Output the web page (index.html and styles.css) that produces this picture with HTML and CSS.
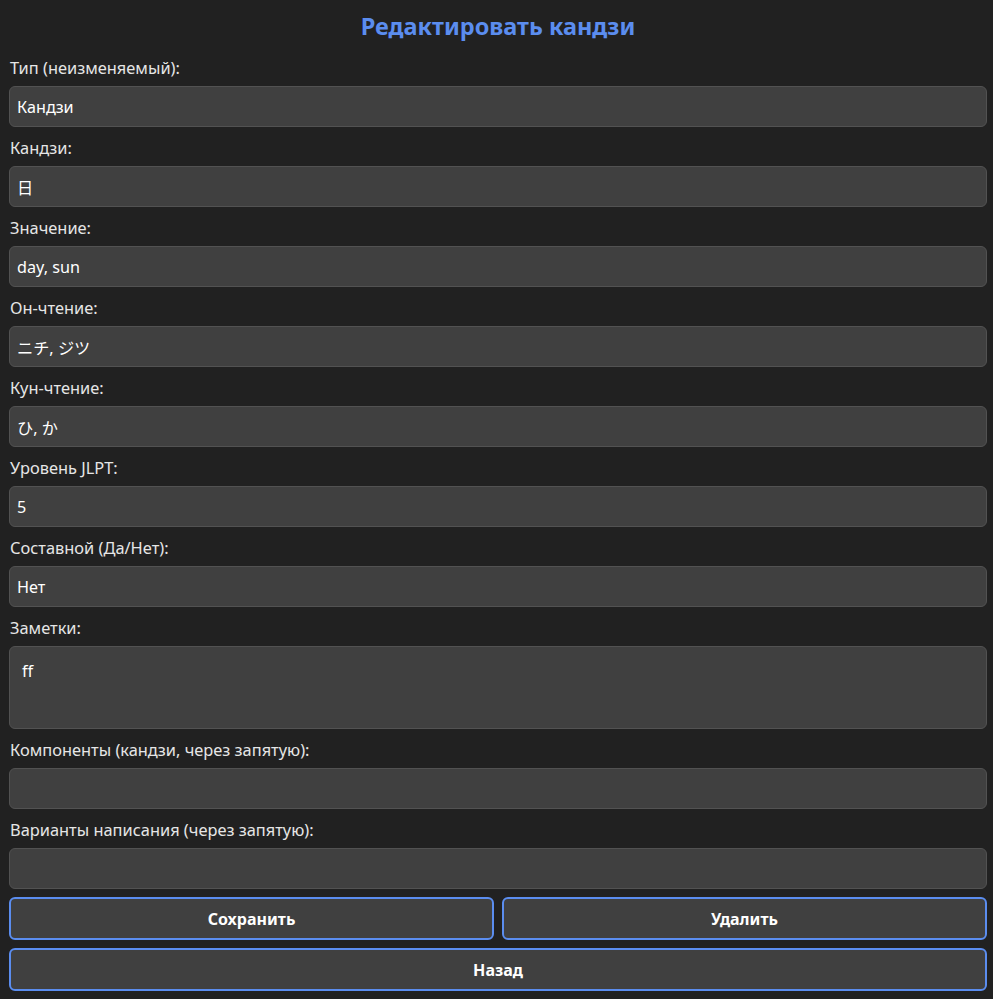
FILE: index.html
```html
<!DOCTYPE html>
<html lang="ru">
<head>
<meta charset="utf-8">
<title>Редактировать кандзи</title>
<link rel="stylesheet" href="styles.css">
</head>
<body>
<div class="page">
  <h2 class="title">Редактировать кандзи</h2>
  <form class="form">
    <label class="label">Тип (неизменяемый):</label>
    <input class="field" type="text" value="Кандзи" readonly>
    <label class="label">Кандзи:</label>
    <input class="field jp" type="text" value="日">
    <label class="label">Значение:</label>
    <input class="field" type="text" value="day, sun">
    <label class="label">Он-чтение:</label>
    <input class="field jp" type="text" value="ニチ, ジツ">
    <label class="label">Кун-чтение:</label>
    <input class="field jp" type="text" value="ひ, か">
    <label class="label">Уровень JLPT:</label>
    <input class="field" type="text" value="5">
    <label class="label">Составной (Да/Нет):</label>
    <input class="field" type="text" value="Нет">
    <label class="label">Заметки:</label>
    <textarea class="field area">ff</textarea>
    <label class="label">Компоненты (кандзи, через запятую):</label>
    <input class="field" type="text" value="">
    <label class="label">Варианты написания (через запятую):</label>
    <input class="field" type="text" value="">
    <div class="actions">
      <button type="button" class="btn">Сохранить</button>
      <button type="button" class="btn">Удалить</button>
    </div>
    <button type="button" class="btn btn-wide">Назад</button>
  </form>
</div>
</body>
</html>
```
FILE: styles.css
```css
* { box-sizing: border-box; }
html, body {
  margin: 0;
  background: #212121;
}
body {
  font-family: "Noto Sans", "Open Sans", sans-serif;
  color: #e6e6e6;
}
.page {
  padding: 0 6px 0 9px;
}
.title {
  margin: 0;
  padding-top: 11px;
  height: 57px;
  text-align: center;
  color: #5b8def;
  font-size: 23.5px;
  font-weight: 700;
  line-height: 30px;
}
.form {
  display: flex;
  flex-direction: column;
}
.label {
  display: block;
  padding-left: 1px;
  font-size: 16.4px;
  line-height: 22px;
  margin-bottom: 7px;
}
.field {
  display: block;
  width: 100%;
  height: 41px;
  margin: 0 0 10px;
  padding: 0 7px;
  background: #404040;
  border: 1px solid #525252;
  border-radius: 6px;
  color: #ffffff;
  font-family: "Noto Sans", "Open Sans", sans-serif;
  font-size: 16.2px;
  outline: none;
}
.field.jp {
  font-family: "Noto Sans", "Noto Sans CJK JP", sans-serif;
}
.area {
  height: 83px;
  padding: 13px 12px;
  line-height: 22px;
  resize: none;
}
.actions {
  display: grid;
  grid-template-columns: 1fr 1fr;
  gap: 8px;
  margin-top: -2px;
}
.btn {
  height: 43px;
  background: #404040;
  border: 2px solid #5b8def;
  border-radius: 6px;
  color: #ffffff;
  font-family: "Noto Sans", "Open Sans", sans-serif;
  font-size: 16px;
  font-weight: 700;
  cursor: pointer;
}
.btn-wide {
  width: 100%;
  margin-top: 8px;
}
```
